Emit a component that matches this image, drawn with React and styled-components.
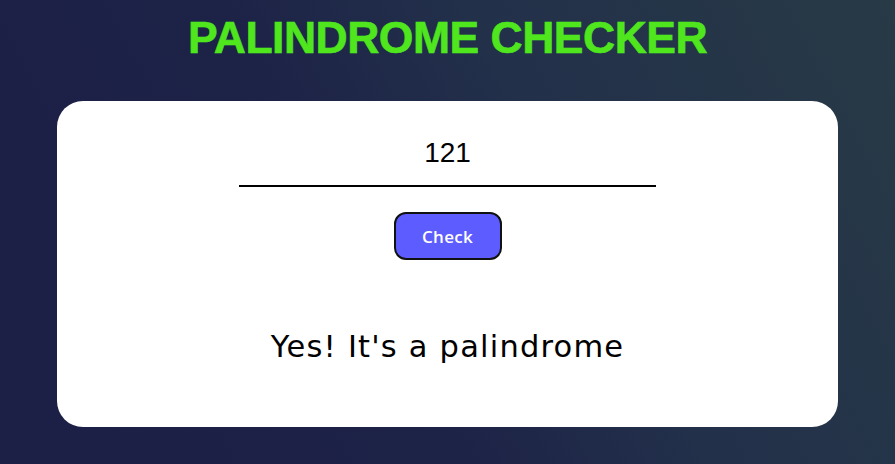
import styled, { createGlobalStyle } from "styled-components"
import { useState } from "react"

const GlobalStyle = createGlobalStyle`
    * { box-sizing: border-box; }
    body {
        margin: 0;
        font-family: "Liberation Sans", Arial, sans-serif;
    }
`

const Page = styled.div`
    min-height: 100vh;
    display: flex;
    flex-direction: column;
    align-items: center;
    background: linear-gradient(62deg, #1c1f46 0%, #1d2247 40%, #22304a 62%, #283a46 100%);
`

const Title = styled.h1`
    margin: 10px 0 0;
    height: 91px;
    font-family: "Liberation Sans", Arial, sans-serif;
    font-weight: 700;
    font-size: 44.5px;
    line-height: 56px;
    letter-spacing: -0.5px;
    color: #4fe61e;
    -webkit-text-stroke: 0.6px #4fe61e;
`

const Card = styled.div`
    width: 781px;
    height: 326px;
    background: #fff;
    border-radius: 26px;
    display: flex;
    flex-direction: column;
    align-items: center;
    padding-top: 34px;
`

const Input = styled.input`
    width: 417px;
    height: 52px;
    border: none;
    border-bottom: 2px solid #000;
    outline: none;
    text-align: center;
    font-family: "Liberation Sans", Arial, sans-serif;
    font-size: 28px;
    color: #000;
    background: transparent;
    padding: 0 0 15px;
`

const CheckButton = styled.button`
    margin-top: 25px;
    width: 108px;
    height: 48px;
    background: #5c5cff;
    border: 2px solid #111;
    border-radius: 12px;
    color: #fff;
    font-family: "Open Sans", sans-serif;
    font-weight: 600;
    font-size: 17px;
    letter-spacing: 0.3px;
    cursor: pointer;
`

const Result = styled.p`
    margin: 69px 0 0;
    font-family: "DejaVu Sans", sans-serif;
    font-size: 30.5px;
    line-height: 36px;
    letter-spacing: 1.2px;
    color: #000;
`

export default function App() {
    const [word, setWord] = useState("121")
    const [result, setResult] = useState("Yes! It's a palindrome")

    const check = () => {
        const clean = word.toLowerCase().replace(/[^a-z0-9]/g, "")
        const isPal = clean.length > 0 && clean === clean.split("").reverse().join("")
        setResult(isPal ? "Yes! It's a palindrome" : "No! It's not a palindrome")
    }

    return (
        <>
            <GlobalStyle />
            <Page>
                <Title>PALINDROME CHECKER</Title>
                <Card>
                    <Input value={word} onChange={(e) => setWord(e.target.value)} />
                    <CheckButton onClick={check}>Check</CheckButton>
                    <Result>{result}</Result>
                </Card>
            </Page>
        </>
    )
}
